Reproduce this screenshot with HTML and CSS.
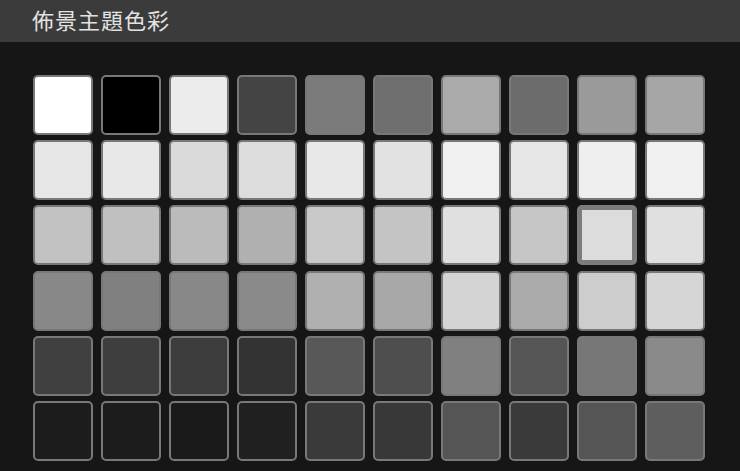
FILE: index.html
```html
<!DOCTYPE html>
<html lang="zh-Hant">
<head>
<meta charset="utf-8">
<title>佈景主題色彩</title>
<link rel="stylesheet" href="styles.css">
</head>
<body>
<header class="bar"><h1 class="title">佈景主題色彩</h1></header>
<main class="panel">
  <div class="grid">
    <div class="sw" style="background:#ffffff"></div>
    <div class="sw" style="background:#000000"></div>
    <div class="sw" style="background:#ececec"></div>
    <div class="sw" style="background:#444444"></div>
    <div class="sw" style="background:#7b7b7b"></div>
    <div class="sw" style="background:#6e6e6e"></div>
    <div class="sw" style="background:#aaaaaa"></div>
    <div class="sw" style="background:#6c6c6c"></div>
    <div class="sw" style="background:#9a9a9a"></div>
    <div class="sw" style="background:#a6a6a6"></div>

    <div class="sw" style="background:#e6e6e6"></div>
    <div class="sw" style="background:#e8e8e8"></div>
    <div class="sw" style="background:#dadada"></div>
    <div class="sw" style="background:#dcdcdc"></div>
    <div class="sw" style="background:#e8e8e8"></div>
    <div class="sw" style="background:#e2e2e2"></div>
    <div class="sw" style="background:#f0f0f0"></div>
    <div class="sw" style="background:#e6e6e6"></div>
    <div class="sw" style="background:#efefef"></div>
    <div class="sw" style="background:#f0f0f0"></div>

    <div class="sw" style="background:#c2c2c2"></div>
    <div class="sw" style="background:#c0c0c0"></div>
    <div class="sw" style="background:#bbbbbb"></div>
    <div class="sw" style="background:#b0b0b0"></div>
    <div class="sw" style="background:#c8c8c8"></div>
    <div class="sw" style="background:#c4c4c4"></div>
    <div class="sw" style="background:#e0e0e0"></div>
    <div class="sw" style="background:#c6c6c6"></div>
    <div class="sw selected" style="background:#dcdcdc"></div>
    <div class="sw" style="background:#e0e0e0"></div>

    <div class="sw" style="background:#888888"></div>
    <div class="sw" style="background:#808080"></div>
    <div class="sw" style="background:#888888"></div>
    <div class="sw" style="background:#8a8a8a"></div>
    <div class="sw" style="background:#b0b0b0"></div>
    <div class="sw" style="background:#a8a8a8"></div>
    <div class="sw" style="background:#d4d4d4"></div>
    <div class="sw" style="background:#aaaaaa"></div>
    <div class="sw" style="background:#cdcdcd"></div>
    <div class="sw" style="background:#d6d6d6"></div>

    <div class="sw" style="background:#404040"></div>
    <div class="sw" style="background:#3e3e3e"></div>
    <div class="sw" style="background:#3c3c3c"></div>
    <div class="sw" style="background:#333333"></div>
    <div class="sw" style="background:#585858"></div>
    <div class="sw" style="background:#4e4e4e"></div>
    <div class="sw" style="background:#808080"></div>
    <div class="sw" style="background:#555555"></div>
    <div class="sw" style="background:#777777"></div>
    <div class="sw" style="background:#8a8a8a"></div>

    <div class="sw" style="background:#1c1c1c"></div>
    <div class="sw" style="background:#1c1c1c"></div>
    <div class="sw" style="background:#1a1a1a"></div>
    <div class="sw" style="background:#202020"></div>
    <div class="sw" style="background:#3a3a3a"></div>
    <div class="sw" style="background:#383838"></div>
    <div class="sw" style="background:#555555"></div>
    <div class="sw" style="background:#3a3a3a"></div>
    <div class="sw" style="background:#555555"></div>
    <div class="sw" style="background:#5e5e5e"></div>
  </div>
</main>
</body>
</html>
```
FILE: styles.css
```css
html, body {
  margin: 0;
  padding: 0;
  width: 740px;
  height: 471px;
  overflow: hidden;
  background: #161616;
}
.bar {
  height: 42px;
  background: #3b3b3b;
  display: flex;
  align-items: center;
  padding-left: 32px;
  box-sizing: border-box;
}
.title {
  margin: 0 0 4px 0;
  font-family: "Noto Sans CJK TC", "Noto Sans CJK SC", sans-serif;
  font-weight: 400;
  font-size: 22px;
  line-height: 1;
  color: #e2e2e2;
  letter-spacing: 1px;
}
.panel {
  padding: 33px 0 0 33px;
}
.grid {
  display: grid;
  grid-template-columns: repeat(10, 60px);
  grid-auto-rows: 60px;
  column-gap: 8px;
  row-gap: 5.2px;
}
.sw {
  box-sizing: border-box;
  border: 2px solid #787878;
  border-radius: 5px;
}
.sw.selected {
  border-width: 5px;
  border-color: #7c7c7c;
  border-radius: 5px;
}
```
